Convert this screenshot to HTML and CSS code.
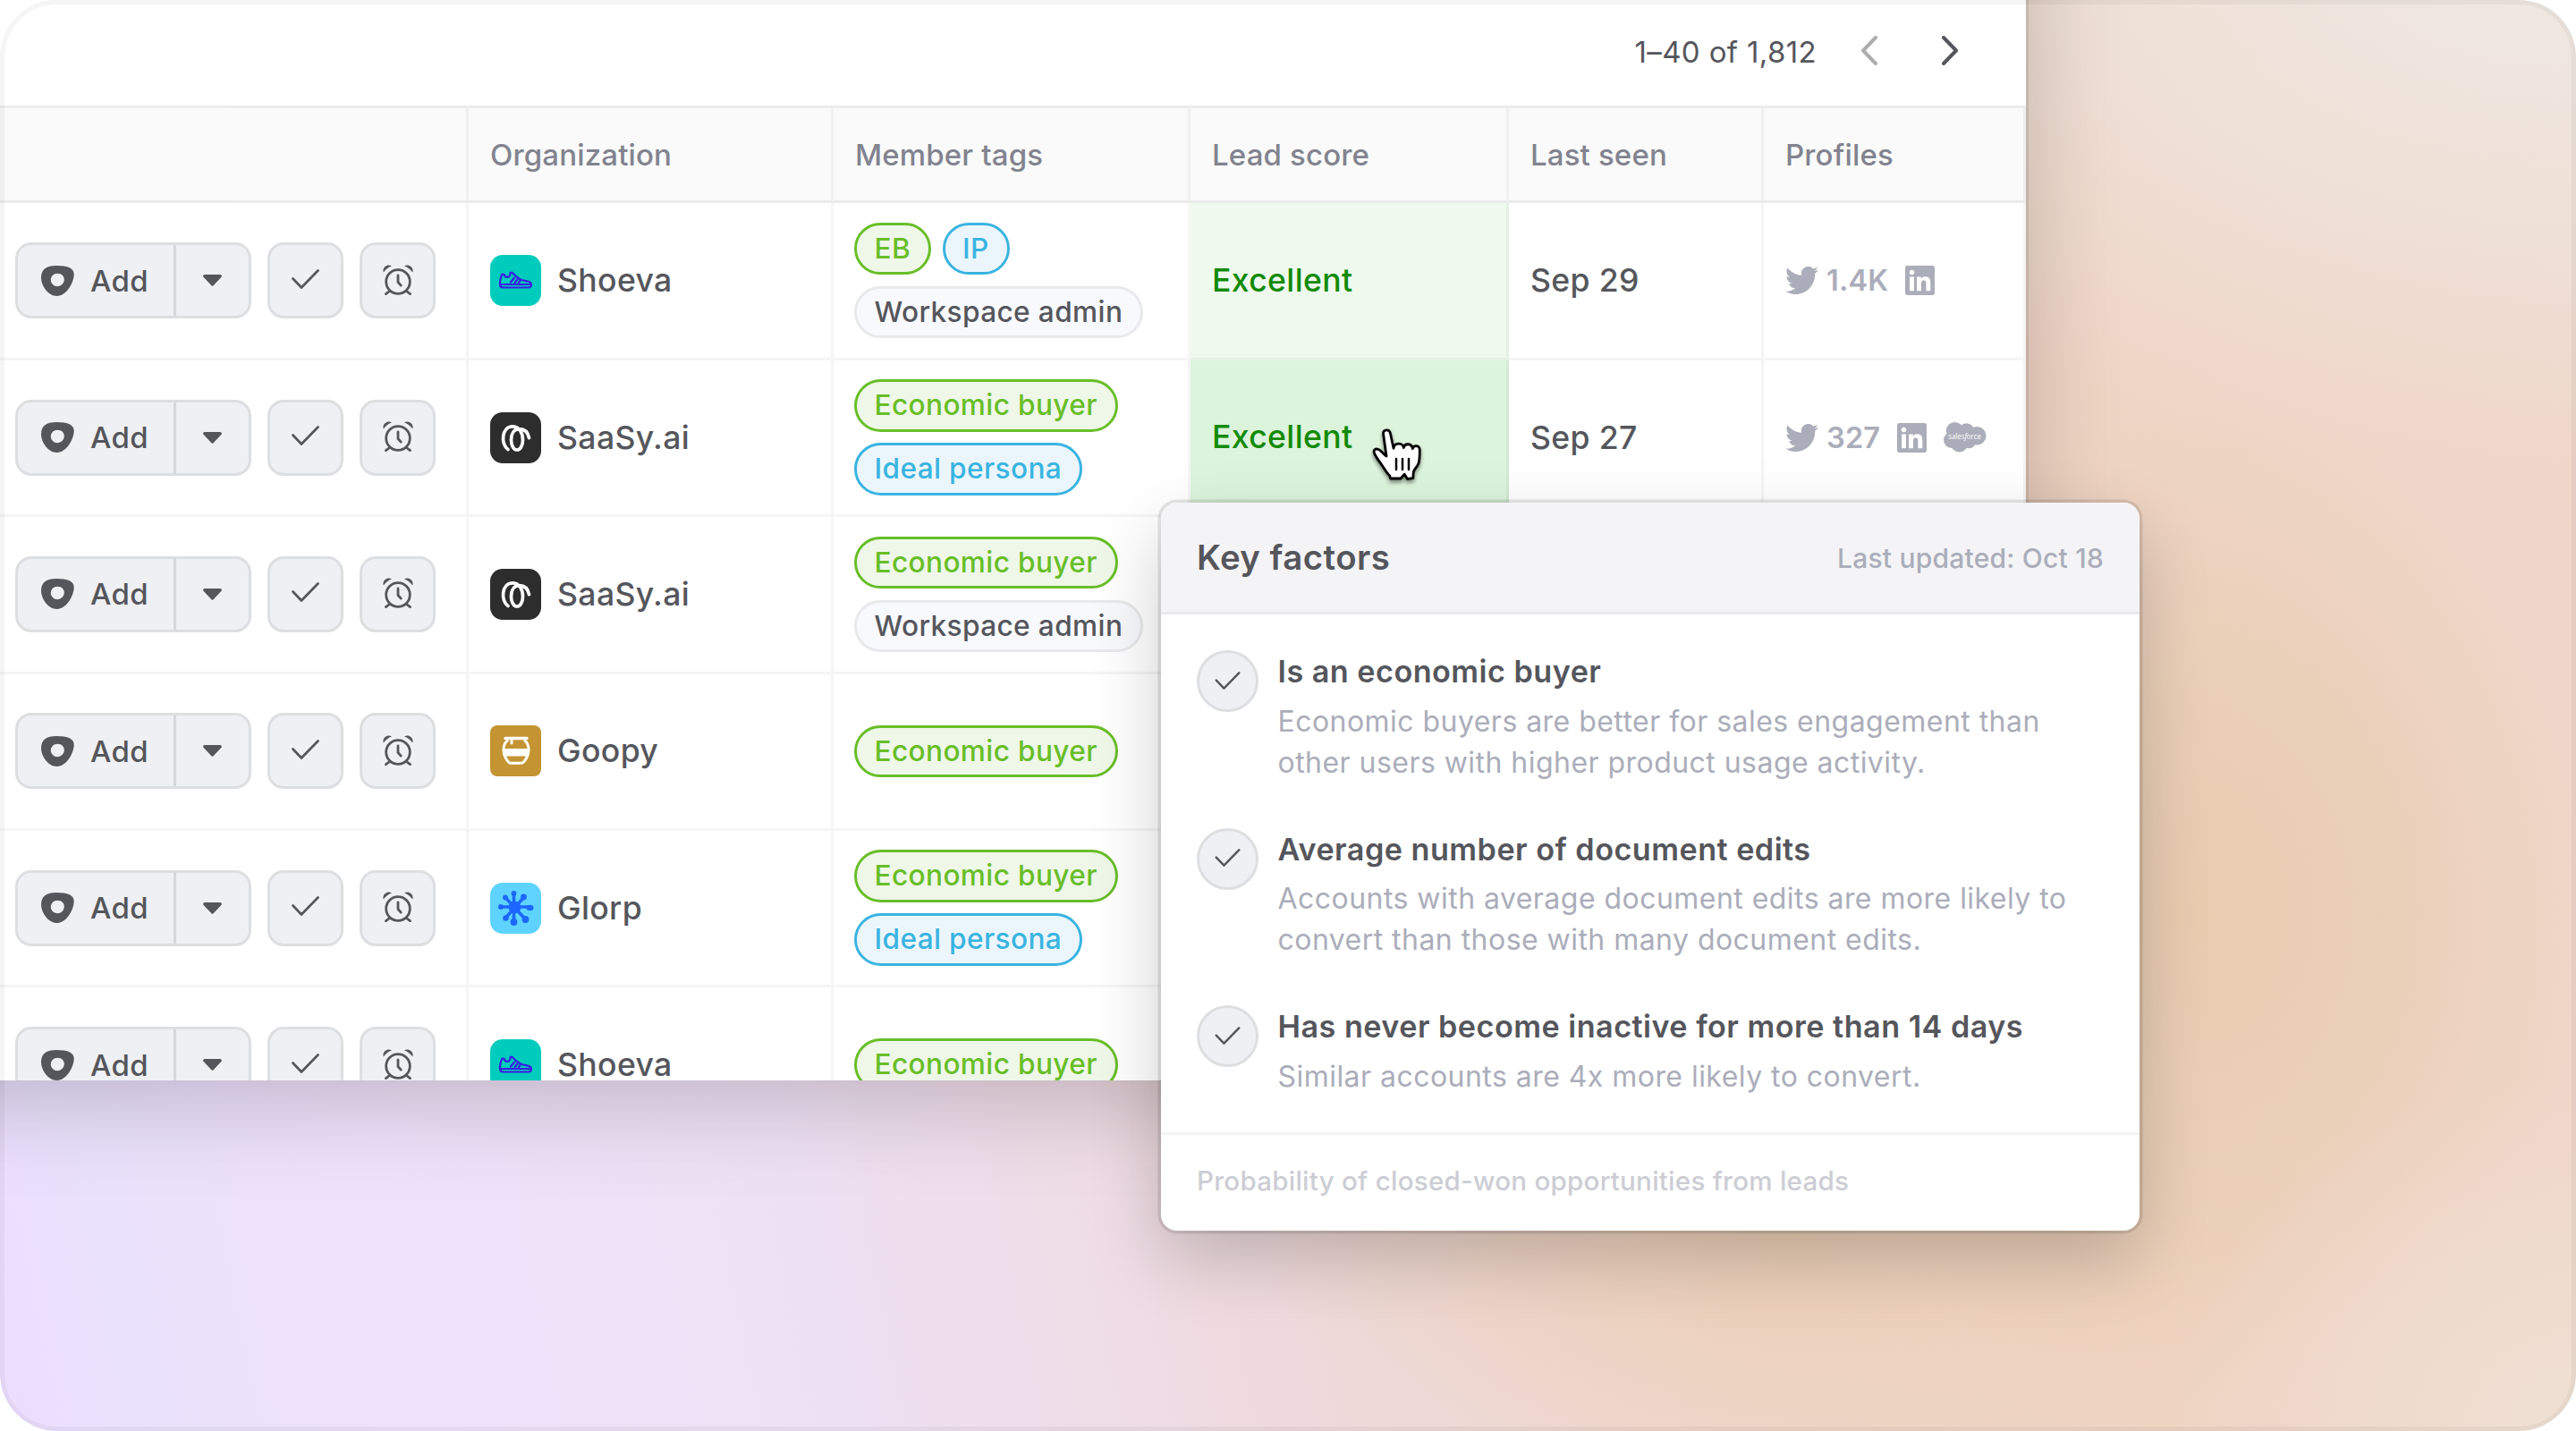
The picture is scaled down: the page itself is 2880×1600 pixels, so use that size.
FILE: index.html
```
<!DOCTYPE html>
<html lang="en">
<head>
    <meta charset="UTF-8">
    <title>Members</title>
    <link rel="stylesheet" href="styles.css">
</head>
<body>
    <!-- Icon sprite -->
    <svg class="sprite">
        <symbol id="i-blob" viewBox="0 0 37 34">
            <path fill-rule="evenodd" d="M0 13.500C0 4 6 0 17 0c13 0 19.700 3 19.700 9.500C36.700 18 29 34 17.500 34 8 34 0 22.500 0 13.500zM10.800 16c0 4 3.400 7.200 7.600 7.200 3.800 0 7.400-3.200 7.400-7.600 0-4-3-6.800-7.400-6.800-4.400 0-7.600 3.200-7.600 7.200z"/>
        </symbol>
        <symbol id="i-caret" viewBox="0 0 21 13">
            <path d="M2 0h17c1.800 0 2.500 1.900 1.300 3.100l-8.700 9.200c-.6.7-1.600.7-2.200 0L.7 3.100C-.5 1.900.2 0 2 0z"/>
        </symbol>
        <symbol id="i-check" viewBox="0 0 31 22">
            <path d="M1.500 10.500l9.500 10L29.500 1.500" fill="none" stroke="currentColor" stroke-width="2.700" stroke-linecap="round" stroke-linejoin="round"/>
        </symbol>
        <symbol id="i-alarm" viewBox="0 0 34 34">
            <circle cx="17" cy="19" r="13.300" fill="none" stroke="currentColor" stroke-width="2.800"/>
            <path d="M17 12v7.500l3.200 3.600M7.500 29.500l-4 3.200M26.500 29.500l4 3.200" fill="none" stroke="currentColor" stroke-width="2.800" stroke-linecap="round" stroke-linejoin="round"/>
            <path d="M.8 8.600C-1.200 3 5.500-1.500 10 1.500 6.500 2.600 3 5.300.8 8.600zM33.200 8.600C35.200 3 28.500-1.500 24 1.500c3.500 1.100 7 3.800 9.200 7.100z"/>
        </symbol>
        <symbol id="i-twitter" viewBox="0 2.200 24 19.500" preserveAspectRatio="none">
            <path d="M23.953 4.57a10 10 0 01-2.825.775 4.958 4.958 0 002.163-2.723c-.951.555-2.005.959-3.127 1.184a4.92 4.92 0 00-8.384 4.482C7.69 8.095 4.067 6.13 1.64 3.162a4.822 4.822 0 00-.666 2.475c0 1.71.87 3.213 2.188 4.096a4.904 4.904 0 01-2.228-.616v.06a4.923 4.923 0 003.946 4.827 4.996 4.996 0 01-2.212.085 4.936 4.936 0 004.604 3.417 9.867 9.867 0 01-6.102 2.105c-.39 0-.779-.023-1.17-.067a13.995 13.995 0 007.557 2.209c9.053 0 13.998-7.496 13.998-13.985 0-.21 0-.42-.015-.63A9.935 9.935 0 0024 4.59z"/>
        </symbol>
        <symbol id="i-linkedin" viewBox="0 32 448 448">
            <path d="M416 32H31.900C14.300 32 0 46.500 0 64.300v383.400C0 465.500 14.300 480 31.900 480H416c17.600 0 32-14.500 32-32.300V64.300c0-17.800-14.400-32.300-32-32.300zM135.400 416H69V202.200h66.500V416zm-33.200-243c-21.300 0-38.500-17.300-38.500-38.500S80.900 96 102.200 96c21.200 0 38.500 17.300 38.500 38.500 0 21.300-17.200 38.500-38.500 38.500zm282.100 243h-66.400V312c0-24.800-.5-56.700-34.500-56.700-34.600 0-39.900 27-39.900 54.900V416h-66.400V202.200h63.700v29.200h.9c8.900-16.800 30.600-34.500 62.900-34.500 67.200 0 79.700 44.300 79.700 101.900V416z"/>
        </symbol>
        <symbol id="logo-shoeva" viewBox="0 0 57 57">
            <rect width="57" height="57" rx="14" fill="#00ccbe"/>
            <g fill="none" stroke="#3a1be0" stroke-width="2.200" stroke-linejoin="round" stroke-linecap="round">
                <path d="M11 33c-.3-3.500.9-8 2.400-11.500l2.200.3c1.300 4 5.600 3.600 6.400 1.400l.6-3.300 1.900-.2c3 3 7.500 7.200 11.500 8.600 3.500 1 6.500.8 8.500 2.200 1.300.9 1.600 2 1.500 3 0 1.800-1.200 3-3.500 3H14.500c-2.700 0-3.500-1-3.500-3.500z"/>
                <path d="M11 33h35M27 25.500l-4 5M30.300 27.500l-2.600 3.500M33.500 29l-1.500 2"/>
            </g>
        </symbol>
        <symbol id="logo-saasy" viewBox="0 0 57 57">
            <rect width="57" height="57" rx="14" fill="#2d2d2d"/>
            <path d="M20 41.500C11.500 36 12.500 15.500 25.500 15.800 33 16 36.500 24 36.500 31c0 6.500-3 11-6.500 11s-6.500-4.500-6.500-11c0-7 3-12.300 9-12.300 6 0 9.800 4 11 10" fill="none" stroke="#fff" stroke-width="3.700" stroke-linecap="round"/>
        </symbol>
        <symbol id="logo-goopy" viewBox="0 0 57 57">
            <rect width="57" height="57" rx="8" fill="#c49432"/>
            <path d="M17 14.500h24" stroke="#fff" stroke-width="3.400" stroke-linecap="round"/>
            <path d="M20 16.500c-7 5-6.500 16.500.5 24.500.8 1 1.600 1.300 2.500 1.300h12c1 0 1.700-.4 2.500-1.300 7-8 7.500-19.500.5-24.500" fill="none" stroke="#fff" stroke-width="3"/>
            <path d="M14.500 26h28.500c.3 3-.5 6-2 8.500H16.500c-1.500-2.500-2.300-5.500-2-8.500z" fill="#fff"/>
            <path d="M24 15v5" stroke="#fff" stroke-width="3" stroke-linecap="round"/>
        </symbol>
        <symbol id="logo-glorp" viewBox="0 0 57 57">
            <rect width="57" height="57" rx="14" fill="#5fd3ff"/>
            <g fill="#1c68ff" stroke="#1c68ff" stroke-linecap="round">
                <circle cx="27.500" cy="27.500" r="6.500"/>
                <path d="M26.500 12v31M38 16L17.500 39M11.500 27H45M17 16.500l23 25" stroke-width="3.600"/>
                <g stroke="none">
                    <circle cx="26.500" cy="12" r="2.900"/>
                    <circle cx="37.500" cy="16" r="3.400"/>
                    <ellipse cx="44.500" cy="28" rx="4" ry="3.200"/>
                    <circle cx="39.500" cy="41" r="3.900"/>
                    <circle cx="26.500" cy="44" r="3.900"/>
                    <circle cx="17.500" cy="39.500" r="3.300"/>
                    <circle cx="12" cy="27" r="3"/>
                    <circle cx="17" cy="16.500" r="2.900"/>
                </g>
            </g>
        </symbol>
    </svg>

    <div class="stage">
        <div class="window">
            <div class="toolbar">
                <span class="range">1–40 of 1,812</span>
                <svg class="chevron prev" viewBox="0 0 18 33"><path d="M16 2L2 16.500 16 31"/></svg>
                <svg class="chevron next" viewBox="0 0 18 33"><path d="M2 2l14 14.500L2 31"/></svg>
            </div>

            <div class="row head">
                <div class="cell"></div>
                <div class="cell">Organization</div>
                <div class="cell">Member tags</div>
                <div class="cell">Lead score</div>
                <div class="cell">Last seen</div>
                <div class="cell">Profiles</div>
            </div>

            <div class="row">
                <div class="cell actions">
                    <div class="split"><div class="add"><svg class="blob"><use href="#i-blob"/></svg>Add</div><div class="drop"><svg class="caret"><use href="#i-caret"/></svg></div></div>
                    <div class="btn"><svg class="check"><use href="#i-check"/></svg></div>
                    <div class="btn"><svg class="alarm"><use href="#i-alarm"/></svg></div>
                </div>
                <div class="cell org"><svg class="logo"><use href="#logo-shoeva"/></svg>Shoeva</div>
                <div class="cell tags"><span class="tag green">EB</span><span class="tag blue">IP</span><span class="tag grey">Workspace admin</span></div>
                <div class="cell score">Excellent</div>
                <div class="cell">Sep 29</div>
                <div class="cell profiles">
                    <svg class="twitter"><use href="#i-twitter"/></svg><span class="count">1.4K</span>
                    <svg class="linkedin"><use href="#i-linkedin"/></svg>
                </div>
            </div>

            <div class="row">
                <div class="cell actions">
                    <div class="split"><div class="add"><svg class="blob"><use href="#i-blob"/></svg>Add</div><div class="drop"><svg class="caret"><use href="#i-caret"/></svg></div></div>
                    <div class="btn"><svg class="check"><use href="#i-check"/></svg></div>
                    <div class="btn"><svg class="alarm"><use href="#i-alarm"/></svg></div>
                </div>
                <div class="cell org"><svg class="logo"><use href="#logo-saasy"/></svg>SaaSy.ai</div>
                <div class="cell tags"><span class="tag green">Economic buyer</span><span class="tag blue">Ideal persona</span></div>
                <div class="cell score hover">Excellent</div>
                <div class="cell">Sep 27</div>
                <div class="cell profiles">
                    <svg class="twitter"><use href="#i-twitter"/></svg><span class="count">327</span>
                    <svg class="linkedin"><use href="#i-linkedin"/></svg>
                    <svg class="salesforce" viewBox="0 0 47.500 33.500">
                        <circle cx="12.500" cy="9.700" r="9.700"/>
                        <circle cx="25.500" cy="9.800" r="8.600"/>
                        <circle cx="37.200" cy="15.200" r="10.300"/>
                        <circle cx="9" cy="20" r="9"/>
                        <circle cx="17.500" cy="24" r="9.500"/>
                        <circle cx="28.500" cy="21.500" r="7.800"/>
                        <text x="5.300" y="19" textLength="36.500" lengthAdjust="spacingAndGlyphs">sales<tspan font-style="italic">f</tspan>orce</text>
                    </svg>
                </div>
            </div>

            <div class="row">
                <div class="cell actions">
                    <div class="split"><div class="add"><svg class="blob"><use href="#i-blob"/></svg>Add</div><div class="drop"><svg class="caret"><use href="#i-caret"/></svg></div></div>
                    <div class="btn"><svg class="check"><use href="#i-check"/></svg></div>
                    <div class="btn"><svg class="alarm"><use href="#i-alarm"/></svg></div>
                </div>
                <div class="cell org"><svg class="logo"><use href="#logo-saasy"/></svg>SaaSy.ai</div>
                <div class="cell tags"><span class="tag green">Economic buyer</span><span class="tag grey">Workspace admin</span></div>
                <div class="cell"></div>
                <div class="cell"></div>
                <div class="cell"></div>
            </div>

            <div class="row">
                <div class="cell actions">
                    <div class="split"><div class="add"><svg class="blob"><use href="#i-blob"/></svg>Add</div><div class="drop"><svg class="caret"><use href="#i-caret"/></svg></div></div>
                    <div class="btn"><svg class="check"><use href="#i-check"/></svg></div>
                    <div class="btn"><svg class="alarm"><use href="#i-alarm"/></svg></div>
                </div>
                <div class="cell org"><svg class="logo"><use href="#logo-goopy"/></svg>Goopy</div>
                <div class="cell tags"><span class="tag green">Economic buyer</span></div>
                <div class="cell"></div>
                <div class="cell"></div>
                <div class="cell"></div>
            </div>

            <div class="row">
                <div class="cell actions">
                    <div class="split"><div class="add"><svg class="blob"><use href="#i-blob"/></svg>Add</div><div class="drop"><svg class="caret"><use href="#i-caret"/></svg></div></div>
                    <div class="btn"><svg class="check"><use href="#i-check"/></svg></div>
                    <div class="btn"><svg class="alarm"><use href="#i-alarm"/></svg></div>
                </div>
                <div class="cell org"><svg class="logo"><use href="#logo-glorp"/></svg>Glorp</div>
                <div class="cell tags"><span class="tag green">Economic buyer</span><span class="tag blue">Ideal persona</span></div>
                <div class="cell"></div>
                <div class="cell"></div>
                <div class="cell"></div>
            </div>

            <div class="row">
                <div class="cell actions">
                    <div class="split"><div class="add"><svg class="blob"><use href="#i-blob"/></svg>Add</div><div class="drop"><svg class="caret"><use href="#i-caret"/></svg></div></div>
                    <div class="btn"><svg class="check"><use href="#i-check"/></svg></div>
                    <div class="btn"><svg class="alarm"><use href="#i-alarm"/></svg></div>
                </div>
                <div class="cell org"><svg class="logo"><use href="#logo-shoeva"/></svg>Shoeva</div>
                <div class="cell tags"><span class="tag green">Economic buyer</span></div>
                <div class="cell"></div>
                <div class="cell"></div>
                <div class="cell"></div>
            </div>
        </div>

        <!-- Lead score popover -->
        <div class="popover">
            <div class="popover-head">
                <h2>Key factors</h2>
                <span class="updated">Last updated: Oct 18</span>
            </div>
            <div class="factors">
                <div class="factor">
                    <div class="dot"><svg class="check"><use href="#i-check"/></svg></div>
                    <div>
                        <h3>Is an economic buyer</h3>
                        <p>Economic buyers are better for sales engagement than<br>other users with higher product usage activity.</p>
                    </div>
                </div>
                <div class="factor">
                    <div class="dot"><svg class="check"><use href="#i-check"/></svg></div>
                    <div>
                        <h3>Average number of document edits</h3>
                        <p>Accounts with average document edits are more likely to<br>convert than those with many document edits.</p>
                    </div>
                </div>
                <div class="factor">
                    <div class="dot"><svg class="check"><use href="#i-check"/></svg></div>
                    <div>
                        <h3>Has never become inactive for more than 14 days</h3>
                        <p>Similar accounts are 4x more likely to convert.</p>
                    </div>
                </div>
            </div>
            <div class="popover-foot">Probability of closed-won opportunities from leads</div>
        </div>

        <svg class="cursor" viewBox="-2 -2 60 64">
            <path d="M11.600 5.500C11 2.500 13 .8 15.300.8c2.200 0 3.800 1.500 4.200 4L23 21.300c.6-6.500 10.300-6.800 11.300-.8 1-5.300 9.200-5 10 1 1.500-4.500 8-3.800 8 2 0 6-.3 11-1.300 14.500-1.300 4-5 6.500-5.700 9.700l-.5 7-6.300.8-3.300-5.200-4.200 4.700H19.500l-.8-3C15 48.500 13 44.500 11 41.500 8 37 4.500 33 2 28c-1-2.300-1.400-3.700-.6-4.700 1.800-2.300 5-1.300 7.100.7 2.500 2.300 4 4.700 6.500 6z" fill="#fff" stroke="#000" stroke-width="2.800" stroke-linejoin="round"/>
            <path d="M26 33v12M33 33v12M40 33v12" stroke="#000" stroke-width="2.500" stroke-linecap="round"/>
        </svg>
    </div>
</body>
</html>
```
FILE: styles.css
```
* {
    box-sizing: border-box;
}

body {
    margin: 0;
    background-color: #fff;
    color: #55565c;
    font-family: Inter, "Liberation Sans", sans-serif;
    font-weight: 500;
}

h2, h3, p {
    margin: 0;
}

svg {
    display: block;
    flex: none;
    fill: currentColor;
}

.sprite {
    position: absolute;
    width: 0;
    height: 0;
}

.stage {
    position: relative;
    width: 2880px;
    height: 1600px;
    overflow: hidden;
    border-radius: 64px;
    background:
        radial-gradient(ellipse 1000px 580px at 2860px -60px, #efe8e3 0%, rgba(239, 230, 223, 0.8) 40%, rgba(240, 216, 202, 0) 100%),
        radial-gradient(ellipse 450px 400px at 2880px 1600px, #efe0d4 0%, rgba(239, 221, 208, 0) 100%),
        radial-gradient(ellipse 460px 560px at 2440px 1020px, #e8ccb0 0%, rgba(232, 204, 176, 0.75) 35%, rgba(236, 208, 185, 0) 100%),
        radial-gradient(ellipse 600px 260px at 2000px 1380px, rgba(234, 205, 178, 0.8) 0%, rgba(236, 208, 185, 0) 100%),
        linear-gradient(78deg, #ecdefe 0%, #eae1fc 5%, #efe1fa 15%, #eee0f4 29%, #efdce5 40%, #eed9d8 48%, #efd6c9 60%, #efd4c3 75%, #efd7ca 100%);
}

/* hairline frame over everything inside the stage */
.stage::after {
    content: "";
    position: absolute;
    inset: 0;
    border: 5px solid rgba(0, 0, 0, 0.04);
    border-radius: 64px;
}

/* the window bleeds past the top left corner of the stage */
.window {
    width: 2465px;
    height: 1308px;
    margin: -100px 0 0 -200px;
    padding: 100px 0 0 200px;
    overflow: hidden;
    background-color: #fff;
    box-shadow: 3px 0 0 rgba(0, 0, 0, 0.08), 0 24px 100px rgba(0, 0, 0, 0.2);
}

.toolbar {
    display: flex;
    align-items: center;
    justify-content: flex-end;
    height: 118.4px;
    padding: 0 76px 2px 0;
}

.range {
    font-size: 33px;
    font-weight: 400;
    letter-spacing: 0.36px;
}

.chevron {
    width: 18px;
    height: 33px;
    margin-bottom: 3px;
    fill: none;
    stroke: #55565c;
    stroke-width: 4;
    stroke-linecap: round;
    stroke-linejoin: round;
}

.prev {
    margin-left: 50px;
    stroke: #adadad;
}

.next {
    margin-left: 72px;
}

.row {
    display: grid;
    grid-template-columns: 524px 408px 399px 356px 285px 293px;
    height: 175.4px;
}

.cell {
    display: flex;
    align-items: center;
    padding-left: 24px;
    border-right: 3px solid rgba(0, 0, 0, 0.04);
    border-bottom: 3px solid rgba(0, 0, 0, 0.04);
    font-size: 35.6px;
    letter-spacing: 0.35px;
}

.head {
    height: 109.1px;
    background-color: #fafafa;
    color: #82838f;
}

.head .cell {
    border-top: 3px solid rgba(0, 0, 0, 0.055);
    border-bottom-color: rgba(0, 0, 0, 0.055);
    font-size: 33px;
    letter-spacing: 0.15px;
}

.actions {
    gap: 18px;
    padding-left: 16.5px;
    font-size: 33px;
    letter-spacing: 0.3px;
}

.split, .btn {
    display: flex;
    height: 85px;
    border: 3px solid #dddee0;
    border-radius: 18px;
    background-color: #eff0f3;
}

.split {
    width: 264.5px;
}

.add {
    display: flex;
    align-items: center;
    gap: 18px;
    width: 174px;
    padding-left: 26.5px;
}

.drop {
    display: flex;
    flex: 1;
    align-items: center;
    justify-content: center;
    padding-left: 1px;
    border-left: 3px solid #d6d7d9;
}

.btn {
    align-items: center;
    justify-content: center;
    width: 85px;
}

.blob {
    width: 37px;
    height: 34px;
}

.caret {
    width: 21px;
    height: 13px;
}

.check {
    width: 31px;
    height: 22px;
    margin-bottom: 4px;
}

.alarm {
    width: 34px;
    height: 34px;
    margin-bottom: 2px;
}

.org {
    gap: 18px;
}

.logo {
    width: 57px;
    height: 57px;
}

.tags {
    flex-wrap: wrap;
    align-content: center;
    gap: 12.5px;
    padding-left: 23px;
}

.tag {
    height: 58.5px;
    padding: 0 20px 0 19.5px;
    border: 3px solid;
    border-radius: 30px;
    font-size: 31.6px;
    line-height: 52px;
    letter-spacing: 0.38px;
}

.green {
    border-color: #68be28;
    background-color: #eff7e9;
    color: #68be28;
}

.blue {
    border-color: #39b4e1;
    background-color: #ebf6fc;
    color: #39b4e1;
}

.grey {
    border-color: #e9e9eb;
    background-color: #f8f9fc;
}

.score {
    padding-bottom: 1px;
    background-color: #effaef;
    color: #128a04;
}

.hover {
    background-color: #dcf3dc;
}

.profiles {
    color: #abadba;
}

.twitter {
    width: 37px;
    height: 31px;
    margin-right: 9px;
}

.count {
    margin-right: 19px;
    font-size: 32.5px;
    font-weight: 600;
    letter-spacing: 0.2px;
}

.linkedin {
    width: 33px;
    height: 33px;
    margin-right: 19px;
}

.salesforce {
    width: 47.5px;
    height: 33.5px;
}

.salesforce text {
    fill: #fff;
    font-family: "Open Sans", sans-serif;
    font-size: 9px;
    font-weight: 400;
    letter-spacing: 0;
}

.popover {
    position: absolute;
    top: 562px;
    left: 1298px;
    width: 1094px;
    height: 814px;
    border-radius: 18px;
    background-color: #fff;
    box-shadow: 0 0 0 3.5px rgba(0, 0, 0, 0.1), 0 32px 80px rgba(0, 0, 0, 0.2);
}

.popover-head {
    display: flex;
    align-items: center;
    justify-content: space-between;
    height: 125px;
    padding: 0 40px;
    border-bottom: 3px solid #e9e9ec;
    border-radius: 18px 18px 0 0;
    background-color: #f4f4f7;
}

h2 {
    font-size: 38.4px;
    font-weight: 600;
    letter-spacing: 0.45px;
}

.updated {
    padding-top: 1px;
    color: #abadba;
    font-size: 30px;
    letter-spacing: 0.22px;
}

.factors {
    display: flex;
    flex-direction: column;
    gap: 50px;
    height: 582px;
    padding: 40px 40px 0;
    border-bottom: 3px solid #f4f4f5;
}

.factor {
    display: flex;
    gap: 21.5px;
}

.dot {
    display: flex;
    flex: none;
    align-items: center;
    justify-content: center;
    width: 69px;
    height: 69px;
    border: 3px solid #dddee0;
    border-radius: 50%;
    background-color: #eff0f3;
}

.dot .check {
    width: 29px;
    height: 20px;
    margin-bottom: 2px;
}

h3 {
    padding-top: 1px;
    font-size: 34.2px;
    font-weight: 600;
    line-height: 46px;
    letter-spacing: 0.47px;
}

.factor p {
    margin-top: 9.5px;
    color: #abadba;
    font-size: 32px;
    font-weight: 400;
    line-height: 46px;
    letter-spacing: 0.46px;
}

.popover-foot {
    padding: 33px 40px 0;
    color: #cccdd4;
    font-size: 29.6px;
    letter-spacing: 0.22px;
}

.cursor {
    position: absolute;
    top: 478px;
    left: 1533px;
    width: 60px;
    height: 64px;
    filter: drop-shadow(0 3px 2px rgba(0, 0, 0, 0.45));
}
```
